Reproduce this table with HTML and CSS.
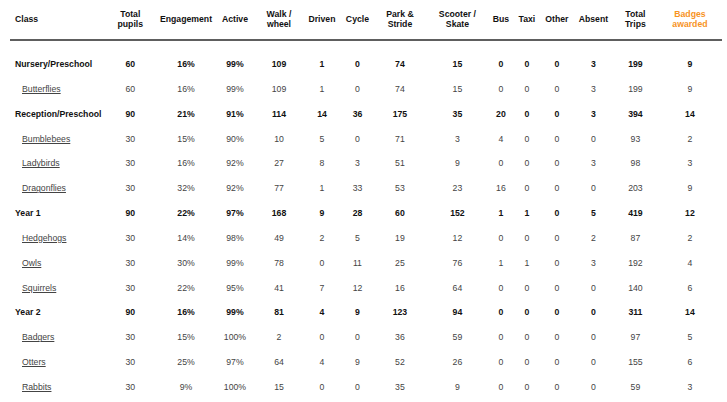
FILE: index.html
```html
<!DOCTYPE html>
<html lang="en">
<head>
<meta charset="utf-8">
<title>Class travel summary</title>
<link rel="stylesheet" href="styles.css">
</head>
<body>
<table class="stats">
  <colgroup>
    <col class="c-class"><col class="c-pupils"><col class="c-eng"><col class="c-active"><col class="c-walk"><col class="c-driven"><col class="c-cycle"><col class="c-park"><col class="c-scoot"><col class="c-bus"><col class="c-taxi"><col class="c-other"><col class="c-absent"><col class="c-trips"><col class="c-badges">
  </colgroup>
  <thead>
    <tr>
      <th class="left">Class</th>
      <th>Total<br>pupils</th>
      <th>Engagement</th>
      <th>Active</th>
      <th>Walk /<br>wheel</th>
      <th>Driven</th>
      <th>Cycle</th>
      <th>Park &amp;<br>Stride</th>
      <th>Scooter /<br>Skate</th>
      <th>Bus</th>
      <th>Taxi</th>
      <th>Other</th>
      <th>Absent</th>
      <th>Total<br>Trips</th>
      <th class="badges">Badges<br>awarded</th>
    </tr>
  </thead>
  <tbody>
    <tr class="spacer"><td colspan="15"></td></tr>
    <tr class="group"><td class="left">Nursery/Preschool</td><td>60</td><td>16%</td><td>99%</td><td>109</td><td>1</td><td>0</td><td>74</td><td>15</td><td>0</td><td>0</td><td>0</td><td>3</td><td>199</td><td>9</td></tr>
    <tr class="sub"><td class="left"><a href="#">Butterflies</a></td><td>60</td><td>16%</td><td>99%</td><td>109</td><td>1</td><td>0</td><td>74</td><td>15</td><td>0</td><td>0</td><td>0</td><td>3</td><td>199</td><td>9</td></tr>
    <tr class="group"><td class="left">Reception/Preschool</td><td>90</td><td>21%</td><td>91%</td><td>114</td><td>14</td><td>36</td><td>175</td><td>35</td><td>20</td><td>0</td><td>0</td><td>3</td><td>394</td><td>14</td></tr>
    <tr class="sub"><td class="left"><a href="#">Bumblebees</a></td><td>30</td><td>15%</td><td>90%</td><td>10</td><td>5</td><td>0</td><td>71</td><td>3</td><td>4</td><td>0</td><td>0</td><td>0</td><td>93</td><td>2</td></tr>
    <tr class="sub"><td class="left"><a href="#">Ladybirds</a></td><td>30</td><td>16%</td><td>92%</td><td>27</td><td>8</td><td>3</td><td>51</td><td>9</td><td>0</td><td>0</td><td>0</td><td>3</td><td>98</td><td>3</td></tr>
    <tr class="sub"><td class="left"><a href="#">Dragonflies</a></td><td>30</td><td>32%</td><td>92%</td><td>77</td><td>1</td><td>33</td><td>53</td><td>23</td><td>16</td><td>0</td><td>0</td><td>0</td><td>203</td><td>9</td></tr>
    <tr class="group"><td class="left">Year 1</td><td>90</td><td>22%</td><td>97%</td><td>168</td><td>9</td><td>28</td><td>60</td><td>152</td><td>1</td><td>1</td><td>0</td><td>5</td><td>419</td><td>12</td></tr>
    <tr class="sub"><td class="left"><a href="#">Hedgehogs</a></td><td>30</td><td>14%</td><td>98%</td><td>49</td><td>2</td><td>5</td><td>19</td><td>12</td><td>0</td><td>0</td><td>0</td><td>2</td><td>87</td><td>2</td></tr>
    <tr class="sub"><td class="left"><a href="#">Owls</a></td><td>30</td><td>30%</td><td>99%</td><td>78</td><td>0</td><td>11</td><td>25</td><td>76</td><td>1</td><td>1</td><td>0</td><td>3</td><td>192</td><td>4</td></tr>
    <tr class="sub"><td class="left"><a href="#">Squirrels</a></td><td>30</td><td>22%</td><td>95%</td><td>41</td><td>7</td><td>12</td><td>16</td><td>64</td><td>0</td><td>0</td><td>0</td><td>0</td><td>140</td><td>6</td></tr>
    <tr class="group"><td class="left">Year 2</td><td>90</td><td>16%</td><td>99%</td><td>81</td><td>4</td><td>9</td><td>123</td><td>94</td><td>0</td><td>0</td><td>0</td><td>0</td><td>311</td><td>14</td></tr>
    <tr class="sub"><td class="left"><a href="#">Badgers</a></td><td>30</td><td>15%</td><td>100%</td><td>2</td><td>0</td><td>0</td><td>36</td><td>59</td><td>0</td><td>0</td><td>0</td><td>0</td><td>97</td><td>5</td></tr>
    <tr class="sub"><td class="left"><a href="#">Otters</a></td><td>30</td><td>25%</td><td>97%</td><td>64</td><td>4</td><td>9</td><td>52</td><td>26</td><td>0</td><td>0</td><td>0</td><td>0</td><td>155</td><td>6</td></tr>
    <tr class="sub"><td class="left"><a href="#">Rabbits</a></td><td>30</td><td>9%</td><td>100%</td><td>15</td><td>0</td><td>0</td><td>35</td><td>9</td><td>0</td><td>0</td><td>0</td><td>0</td><td>59</td><td>3</td></tr>
  </tbody>
</table>
</body>
</html>
```

FILE: styles.css
```css
html, body {
  margin: 0;
  padding: 0;
  background: #ffffff;
}

body {
  font-family: "Liberation Sans", Arial, sans-serif;
  font-size: 8.7px;
  color: #111111;
}

.stats {
  margin-left: 10px;
  width: 712.4px;
  table-layout: fixed;
  border-collapse: collapse;
  border-spacing: 0;
}

.c-class  { width: 93px; }
.c-pupils { width: 54.6px; }
.c-eng    { width: 56.8px; }
.c-active { width: 41.2px; }
.c-walk   { width: 46.8px; }
.c-driven { width: 39.2px; }
.c-cycle  { width: 31.8px; }
.c-park   { width: 53.2px; }
.c-scoot  { width: 61.8px; }
.c-bus    { width: 25.2px; }
.c-taxi   { width: 26.8px; }
.c-other  { width: 33.2px; }
.c-absent { width: 39.8px; }
.c-trips  { width: 44.2px; }
.c-badges { width: 64.8px; }

.stats th,
.stats td {
  padding: 0;
  text-align: center;
  vertical-align: middle;
  white-space: nowrap;
}

.stats thead th {
  height: 38.6px;
  font-weight: bold;
  line-height: 10px;
  color: #111111;
  border-bottom: 2px solid #5e5e5e;
}

.stats .left {
  text-align: left;
  padding-left: 5px;
}

.stats th.badges {
  color: #f7931e;
}

.stats .spacer td {
  height: 11px;
}

.stats tbody tr.group td,
.stats tbody tr.sub td {
  height: 24.85px;
  line-height: 10px;
}

.group td {
  font-weight: bold;
  color: #111111;
}

.sub td {
  color: #444444;
}

.sub td.left {
  padding-left: 12px;
}

.sub a {
  color: #444444;
  text-decoration: underline;
}
```
